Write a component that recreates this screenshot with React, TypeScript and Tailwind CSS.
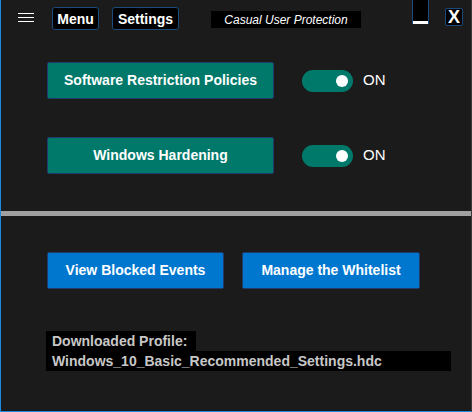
import React from "react";

const Toggle = ({ on }: { on: boolean }) => (
  <div className="flex items-center">
    <div className="w-[51px] h-[22px] rounded-full bg-[#00796b] flex items-center justify-end pr-[5px]">
      <div className="w-[12px] h-[12px] rounded-full bg-white" />
    </div>
    <span className="ml-[10px] text-[15px] text-white">{on ? "ON" : "OFF"}</span>
  </div>
);

const PolicyRow = ({ label }: { label: string }) => (
  <div className="flex items-center">
    <button className="w-[227px] h-[37px] bg-[#00796b] border border-[#1f3a6b] rounded-[2px] text-white text-[14px] font-bold flex items-center justify-center">
      {label}
    </button>
    <div className="ml-[28px]">
      <Toggle on />
    </div>
  </div>
);

export default function App() {
  return (
    <div className="w-[472px] h-[412px] bg-[#1b1b1b] border-l border-b border-r border-l-[#1b8ae0] border-b-[#1b8ae0] border-r-[#3a3a3a] flex flex-col font-['Liberation_Sans',Arial,sans-serif] text-white">
      {/* title bar */}
      <div className="flex items-start h-[40px] pl-[17px]">
        <div className="mt-[13px] w-[16px] flex flex-col gap-[3px]">
          <div className="h-px bg-white" />
          <div className="h-px bg-white" />
          <div className="h-px bg-white" />
        </div>
        <button className="ml-[18px] mt-[7px] w-[47px] h-[23px] bg-black border border-[#1c4a7a] rounded-[3px] text-[14px] font-bold leading-none flex items-center justify-center">
          Menu
        </button>
        <button className="ml-[13px] mt-[7px] w-[67px] h-[23px] bg-black border border-[#1c4a7a] rounded-[3px] text-[14px] font-bold leading-none flex items-center justify-center">
          Settings
        </button>
        <div className="ml-[32px] mt-[11px] w-[150px] h-[17px] bg-black italic text-[12px] leading-none flex items-center justify-center">
          Casual User Protection
        </div>
        <div className="ml-[51px] w-[17px] h-[24px] bg-black border-x border-[#1c4a7a] flex items-end">
          <div className="h-[3px] w-full bg-white" />
        </div>
        <button className="ml-[16px] mt-[8px] w-[18px] h-[18px] bg-black border border-[#1c4a7a] rounded-[2px] text-[18px] font-bold leading-none flex items-center justify-center">
          X
        </button>
      </div>

      {/* policy switches */}
      <div className="flex flex-col gap-[38px] pl-[46px] mt-[22px]">
        <PolicyRow label="Software Restriction Policies" />
        <PolicyRow label="Windows Hardening" />
      </div>

      <div className="mt-[37px] h-[5px] bg-[#a0a0a0]" />

      {/* actions */}
      <div className="flex gap-[18px] pl-[46px] mt-[36px]">
        <button className="w-[177px] h-[37px] bg-[#0077cf] border border-[#1f3a6b] rounded-[2px] text-white text-[14px] font-bold">
          View Blocked Events
        </button>
        <button className="w-[178px] h-[37px] bg-[#0077cf] border border-[#1f3a6b] rounded-[2px] text-white text-[14px] font-bold">
          Manage the Whitelist
        </button>
      </div>

      {/* profile info */}
      <div className="flex flex-col pl-[45px] mt-[42px] text-[14px] font-bold text-[#c8c8c8]">
        <div className="w-[150px] h-[20px] bg-black pl-[6px] leading-[20px]">Downloaded Profile:</div>
        <div className="w-[405px] h-[20px] bg-black pl-[6px] leading-[20px]">
          Windows_10_Basic_Recommended_Settings.hdc
        </div>
      </div>
    </div>
  );
}
